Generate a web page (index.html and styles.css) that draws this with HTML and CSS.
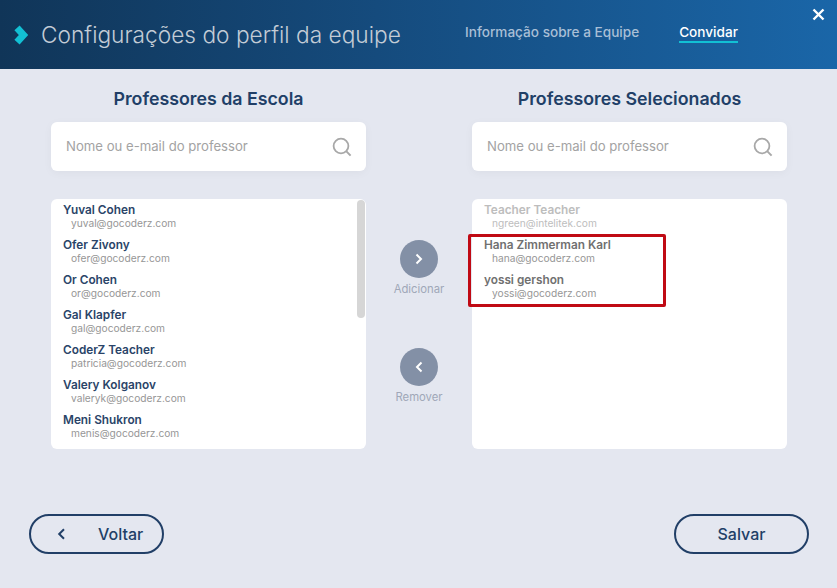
FILE: index.html
```html
<!DOCTYPE html>
<html>
<head>
  <title>Configurações do perfil da equipe</title>
  <meta name="viewport" content="width=device-width, initial-scale=1">
  <link rel="stylesheet" href="styles.css">
</head>
<body>
  <div class="header">
    <svg class="logo" width="15" height="20" viewBox="0 0 15 20"><path d="M3 2.8 L9.5 10 L3 17.2" fill="none" stroke="#12c0d4" stroke-width="7"/></svg>
    <h1>Configurações do perfil da equipe</h1>
    <div class="tabs">
      <span class="tab">Informação sobre a Equipe</span>
      <span class="tab active">Convidar</span>
    </div>
    <svg class="close" width="13" height="13" viewBox="0 0 13 13"><path d="M1.5 1.5 L11.5 11.5 M11.5 1.5 L1.5 11.5" stroke="#fff" stroke-width="2.4"/></svg>
  </div>

  <div class="content">
    <div class="column">
      <h2>Professores da Escola</h2>
      <div class="search">
        <span>Nome ou e-mail do professor</span>
        <svg width="20" height="20" viewBox="0 0 20 20"><circle cx="9" cy="9" r="7.4" fill="none" stroke="#a8a8a8" stroke-width="1.8"/><path d="M14.4 14.4 L18.6 18.6" stroke="#a8a8a8" stroke-width="2"/></svg>
      </div>
      <div class="list">
        <div class="scrollbar"></div>
        <div class="person"><b>Yuval Cohen</b><span>yuval@gocoderz.com</span></div>
        <div class="person"><b>Ofer Zivony</b><span>ofer@gocoderz.com</span></div>
        <div class="person"><b>Or Cohen</b><span>or@gocoderz.com</span></div>
        <div class="person"><b>Gal Klapfer</b><span>gal@gocoderz.com</span></div>
        <div class="person"><b>CoderZ Teacher</b><span>patricia@gocoderz.com</span></div>
        <div class="person"><b>Valery Kolganov</b><span>valeryk@gocoderz.com</span></div>
        <div class="person"><b>Meni Shukron</b><span>menis@gocoderz.com</span></div>
      </div>
    </div>

    <div class="actions">
      <div class="action add">
        <div class="round"><svg width="8" height="12" viewBox="0 0 8 12"><path d="M1.5 1.5 L6 6 L1.5 10.5" fill="none" stroke="#fff" stroke-width="2"/></svg></div>
        <span>Adicionar</span>
      </div>
      <div class="action">
        <div class="round"><svg width="8" height="12" viewBox="0 0 8 12"><path d="M6.5 1.5 L2 6 L6.5 10.5" fill="none" stroke="#fff" stroke-width="2"/></svg></div>
        <span>Remover</span>
      </div>
    </div>

    <div class="column">
      <h2>Professores Selecionados</h2>
      <div class="search">
        <span>Nome ou e-mail do professor</span>
        <svg width="20" height="20" viewBox="0 0 20 20"><circle cx="9" cy="9" r="7.4" fill="none" stroke="#a8a8a8" stroke-width="1.8"/><path d="M14.4 14.4 L18.6 18.6" stroke="#a8a8a8" stroke-width="2"/></svg>
      </div>
      <div class="list selected">
        <div class="person faded"><b>Teacher Teacher</b><span>ngreen@intelitek.com</span></div>
        <div class="person"><b>Hana Zimmerman Karl</b><span>hana@gocoderz.com</span></div>
        <div class="person"><b>yossi gershon</b><span>yossi@gocoderz.com</span></div>
        <div class="highlight"></div>
      </div>
    </div>
  </div>

  <div class="footer">
    <button class="btn back">
      <svg width="9" height="12" viewBox="0 0 9 12"><path d="M7 1.2 L2.2 6 L7 10.8" fill="none" stroke="#213f67" stroke-width="2"/></svg>
      <span>Voltar</span>
    </button>
    <button class="btn">Salvar</button>
  </div>
</body>
</html>
```

FILE: styles.css
```css
body {
  font-family: Inter, 'Noto Sans', sans-serif;
  background: #e4e7f0;
  color: #213f67;
  margin: 0;
  height: 588px;
  overflow: hidden;
}

.header {
  height: 69px;
  background: linear-gradient(90deg, #103558 0%, #154b7d 45%, #1a66a8 100%);
  display: flex;
  align-items: center;
  padding-left: 14px;
  position: relative;
}

.logo {
  margin-right: 12px;
}

h1 {
  font-size: 22.7px;
  font-weight: 300;
  color: #c3ccd6;
  margin: 0;
  width: 424px;
  white-space: nowrap;
}

.tabs {
  display: flex;
  gap: 40px;
  margin-top: -2px;
}

.tab {
  font-size: 13.6px;
  font-weight: 500;
  line-height: 17px;
  color: #a9bfd6;
  border-bottom: 2px solid transparent;
}

.tab.active {
  color: #fff;
  border-bottom-color: #12c0d4;
}

.close {
  position: absolute;
  top: 8px;
  right: 12px;
}

.content {
  display: flex;
  padding: 0 50px 0 51px;
  justify-content: space-between;
}

.column {
  width: 315px;
}

h2 {
  font-size: 17.8px;
  font-weight: 600;
  text-align: center;
  margin: 19px 0 13px;
  line-height: 21px;
}

.search {
  background: white;
  border-radius: 6px;
  height: 49px;
  padding: 0 14px 0 15px;
  display: flex;
  align-items: center;
  justify-content: space-between;
  box-shadow: 0 2px 10px rgba(0, 0, 0, 0.04);
  font-size: 13.15px;
  line-height: 15px;
  color: #a3a3a3;
}

.search span {
  margin-top: -1px;
}

.list {
  background: white;
  border-radius: 6px;
  height: 250px;
  margin-top: 28px;
  box-sizing: border-box;
  padding-left: 12px;
  position: relative;
  overflow: hidden;
}

.list.selected {
  overflow: visible;
}

.scrollbar {
  position: absolute;
  top: 1px;
  right: 1px;
  width: 8px;
  height: 118px;
  border-radius: 4px;
  background: #d6d6d6;
}

.person {
  height: 35px;
  display: flex;
  flex-direction: column;
}

.person b {
  font-size: 11.8px;
  font-weight: 600;
  line-height: 14px;
  margin-top: 4px;
  color: #2a4468;
}

.person span {
  font-size: 10.2px;
  line-height: 13px;
  color: #969696;
  margin-left: 8px;
}

.selected .person b {
  color: #707070;
}

.selected .faded b,
.selected .faded span {
  color: #bdbdbd;
}

.highlight {
  position: absolute;
  left: -4px;
  top: 35px;
  width: 198px;
  height: 73px;
  box-sizing: border-box;
  border: 3px solid #c00a14;
  border-radius: 2px;
}

.actions {
  padding-top: 171px;
  width: 70px;
}

.action {
  display: flex;
  flex-direction: column;
  align-items: center;
  font-size: 11.3px;
  color: #a0a7b8;
}

.action.add {
  margin-bottom: 52px;
}

.action span {
  margin-top: 4px;
  line-height: 14px;
}

.round {
  width: 38px;
  height: 38px;
  border-radius: 50%;
  background: #8390a6;
  display: flex;
  align-items: center;
  justify-content: center;
}

.footer {
  display: flex;
  justify-content: space-between;
  padding: 65px 28px 0 29px;
}

.btn {
  width: 135px;
  height: 40px;
  border: 2px solid #213f67;
  border-radius: 20px;
  background: none;
  color: #213f67;
  font-family: inherit;
  font-size: 16px;
  font-weight: 500;
  padding: 0;
}

.back {
  display: flex;
  align-items: center;
  padding-left: 26px;
}

.back span {
  margin-left: 32px;
}
```
